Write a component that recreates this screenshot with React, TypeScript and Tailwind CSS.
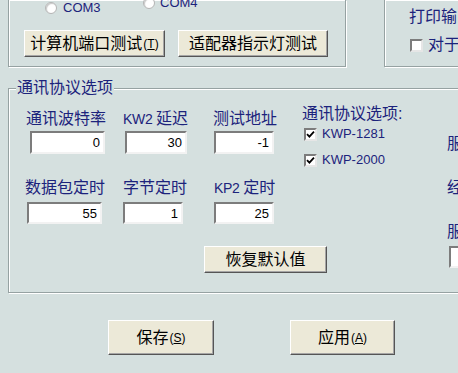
import React from "react";

const label = "text-[16px] leading-[16px] text-[#1c237c] whitespace-nowrap";
const etched = "border border-[#96a2a2] shadow-[inset_1px_1px_0_#fff,1px_1px_0_#fff]";

const Btn = ({ className = "", children }: { className?: string; children: React.ReactNode }) => (
  <button
    className={`flex items-center justify-center shrink-0 bg-[#ece9d8] border border-t-white border-l-white border-r-[#555] border-b-[#555] shadow-[inset_-1px_-1px_0_#a6a6a6] text-black text-[16px] leading-[16px] whitespace-nowrap ${className}`}
  >
    {children}
  </button>
);

const Key = ({ k }: { k: string }) => (
  <span className="text-[12px] ml-[1px]">
    (<u>{k}</u>)
  </span>
);

const Field = ({ value, className = "" }: { value: string; className?: string }) => (
  <input
    readOnly
    value={value}
    className={`block bg-white text-right text-black text-[13px] leading-[15px] pr-[3px] border-2 border-t-[#7c7c7c] border-l-[#7c7c7c] border-r-[#f2f2f2] border-b-[#f2f2f2] outline-none ${className}`}
  />
);

const Radio = () => (
  <span className="block w-[12px] h-[12px] rounded-full bg-white border border-[#b4b4b4] shadow-[inset_1px_1px_1px_#c8c8c8]" />
);

const Check = ({ checked }: { checked?: boolean }) => (
  <span className="flex items-center justify-center shrink-0 w-[13px] h-[13px] bg-white border-2 border-t-[#7c7c7c] border-l-[#7c7c7c] border-r-[#e6e6e6] border-b-[#e6e6e6]">
    {checked && (
      <svg width="9" height="9" viewBox="0 0 9 9">
        <path d="M1 4.2 L3.4 6.6 L8 1.6" stroke="#000" strokeWidth="1.8" fill="none" />
      </svg>
    )}
  </span>
);

export default function App() {
  return (
    <div className="w-[458px] h-[373px] overflow-hidden bg-[#d5e0df] flex flex-col font-['Liberation_Sans','Noto_Sans_CJK_SC',sans-serif]">
      {/* top row: port box + print box, clipped at top */}
      <div className="flex h-[67px] shrink-0">
        <div className={`ml-2 w-[338px] shrink-0 ${etched} border-t-0`}>
          <div className="flex items-start h-[15px]">
            <div className="flex items-start ml-[36px] w-[98px] shrink-0">
              <span className="mt-[2px]">
                <Radio />
              </span>
              <span className="ml-[6px] text-[13px] leading-[15px] text-[#1c237c]">COM3</span>
            </div>
            <div className="flex items-start -mt-[5px]">
              <span className="mt-[2px]">
                <Radio />
              </span>
              <span className="ml-[5px] text-[13px] leading-[15px] text-[#1c237c]">COM4</span>
            </div>
          </div>
          <div className="flex mt-[15px]">
            <Btn className="ml-[15px] w-[141px] h-[27px]">
              计算机端口测试<Key k="T" />
            </Btn>
            <Btn className="ml-[13px] w-[150px] h-[27px]">适配器指示灯测试</Btn>
          </div>
        </div>
        <div className={`ml-[38px] w-[100px] shrink-0 ${etched} border-t-0 border-r-0`}>
          <div className={`${label} pl-[24px] pt-[9px]`}>打印输出</div>
          <div className="flex items-center h-[16px] mt-[12px] ml-[25px]">
            <Check />
            <span className={`${label} ml-[5px]`}>对于</span>
          </div>
        </div>
      </div>

      {/* protocol options group */}
      <div className={`mt-[21px] ml-2 w-[470px] h-[205px] shrink-0 flex flex-col ${etched}`}>
        <div className={`${label} -mt-[9px] ml-[7px] w-fit px-[1px] bg-[#d5e0df]`}>通讯协议选项</div>
        <div className="flex mt-[15px]">
          <div className="pl-[16px] w-[293px] shrink-0">
            <div className="flex">
              <div className="w-[98px]">
                <div className={`${label} ml-[1px]`}>通讯波特率</div>
                <Field value="0" className="mt-[4px] ml-[5px] w-[75px] h-[23px]" />
              </div>
              <div className="w-[90px]">
                <div className={label}>
                  <span className="text-[14px] tracking-[-0.3px]">KW2 </span>延迟
                </div>
                <Field value="30" className="mt-[4px] ml-[2px] w-[62px] h-[23px]" />
              </div>
              <div className="w-[89px]">
                <div className={label}>测试地址</div>
                <Field value="-1" className="mt-[4px] ml-[1px] w-[60px] h-[23px]" />
              </div>
            </div>
            <div className="flex mt-[26px]">
              <div className="w-[98px]">
                <div className={label}>数据包定时</div>
                <Field value="55" className="mt-[6px] ml-[2px] w-[75px] h-[22px]" />
              </div>
              <div className="w-[90px]">
                <div className={label}>字节定时</div>
                <Field value="1" className="mt-[6px] w-[60px] h-[22px]" />
              </div>
              <div className="w-[89px]">
                <div className={`${label} ml-[1px]`}>
                  <span className="text-[14px] tracking-[-0.3px]">KP2 </span>定时
                </div>
                <Field value="25" className="mt-[6px] ml-[1px] w-[60px] h-[22px]" />
              </div>
            </div>
            <Btn className="mt-[22px] ml-[179px] w-[123px] h-[27px]">恢复默认值</Btn>
          </div>

          <div className="w-[145px] shrink-0 -mt-[5px]">
            <div className={label}>通讯协议选项:</div>
            <div className="flex items-center h-[16px] mt-[4px] ml-[2px]">
              <Check checked />
              <span className="ml-[5px] text-[13px] leading-[16px] text-[#1c237c]">KWP-1281</span>
            </div>
            <div className="flex items-center h-[16px] mt-[10px] ml-[2px]">
              <Check checked />
              <span className="ml-[5px] text-[13px] leading-[16px] text-[#1c237c]">KWP-2000</span>
            </div>
          </div>

          <div className="w-[100px] shrink-0">
            <div className={`${label} mt-[25px]`}>服务器</div>
            <div className={`${label} mt-[28px]`}>经销商</div>
            <div className={`${label} mt-[28px]`}>服务站</div>
            <Field value="" className="mt-[6px] ml-[2px] w-[60px] h-[22px]" />
          </div>
        </div>
      </div>

      {/* bottom buttons */}
      <div className="flex mt-[27px]">
        <Btn className="ml-[108px] w-[106px] h-[35px]">
          保存<Key k="S" />
        </Btn>
        <Btn className="ml-[76px] w-[105px] h-[35px]">
          应用<Key k="A" />
        </Btn>
      </div>
    </div>
  );
}
